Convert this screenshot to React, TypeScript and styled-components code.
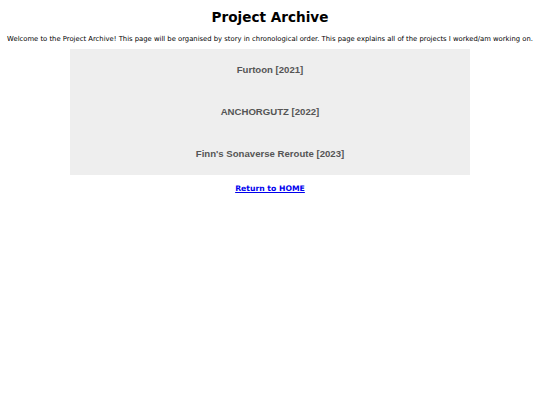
import styled, { createGlobalStyle } from "styled-components";

const GlobalStyle = createGlobalStyle`
  body {
    margin: 0;
    background: #ffffff;
    font-family: "DejaVu Sans", Verdana, sans-serif;
  }
`;

const Page = styled.div`
  display: flex;
  flex-direction: column;
  align-items: center;
  padding-top: 8px;
`;

const Title = styled.h1`
  margin: 0;
  font-size: 13.6px;
  font-weight: bold;
  color: #000;
  line-height: 19px;
`;

const Intro = styled.p`
  margin: 8px 0 0;
  font-size: 6.82px;
  line-height: 9px;
  color: #000;
  text-align: center;
  white-space: nowrap;
`;

const Panel = styled.div`
  margin-top: 5px;
  width: 400px;
  background: #eeeeee;
  display: flex;
  flex-direction: column;
`;

const Project = styled.div`
  font-family: "Liberation Sans", Arial, sans-serif;
  font-weight: bold;
  font-size: 9.6px;
  color: #555555;
  text-align: center;
  line-height: 42px;
`;

const HomeLink = styled.a`
  margin-top: 9px;
  font-size: 7.7px;
  font-weight: bold;
  color: #0000ee;
  text-decoration: underline;
  line-height: 10px;
`;

const projects = ["Furtoon [2021]", "ANCHORGUTZ [2022]", "Finn's Sonaverse Reroute [2023]"];

export default function App() {
  return (
    <>
      <GlobalStyle />
      <Page>
        <Title>Project Archive</Title>
        <Intro>
          Welcome to the Project Archive! This page will be organised by story in chronological order. This page explains all of the projects I worked/am working on.
        </Intro>
        <Panel>
          {projects.map((p) => (
            <Project key={p}>{p}</Project>
          ))}
        </Panel>
        <HomeLink href="#">Return to HOME</HomeLink>
      </Page>
    </>
  );
}
